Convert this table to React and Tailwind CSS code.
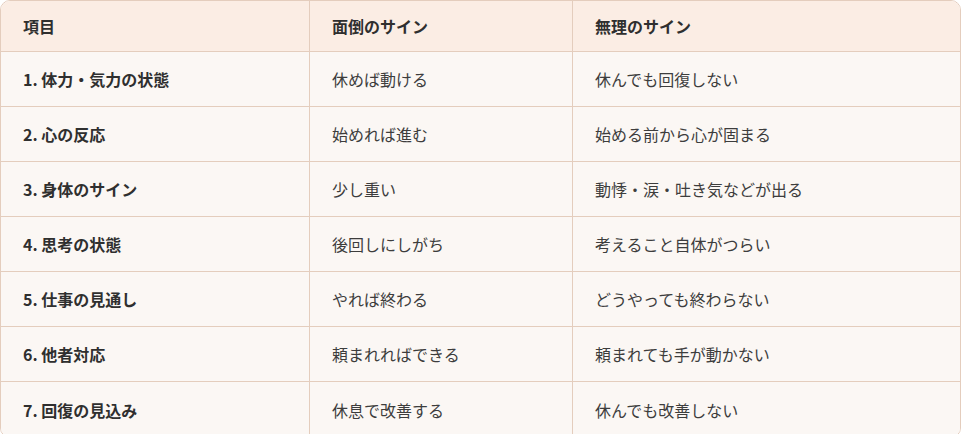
const ROWS = [
  ['1. 体力・気力の状態', '休めば動ける', '休んでも回復しない'],
  ['2. 心の反応', '始めれば進む', '始める前から心が固まる'],
  ['3. 身体のサイン', '少し重い', '動悸・涙・吐き気などが出る'],
  ['4. 思考の状態', '後回しにしがち', '考えること自体がつらい'],
  ['5. 仕事の見通し', 'やれば終わる', 'どうやっても終わらない'],
  ['6. 他者対応', '頼まれればできる', '頼まれても手が動かない'],
  ['7. 回復の見込み', '休息で改善する', '休んでも改善しない'],
];

const HEAD = ['項目', '面倒のサイン', '無理のサイン'];

export default function App() {
  return (
    <div className="w-[961px] bg-white font-['Noto_Sans_CJK_JP',sans-serif] text-[16px]">
      <div className="rounded-[10px] border border-[#e4cdbd] overflow-hidden">
        <div className="grid grid-cols-[309px_263px_1fr] bg-[#fbede4]">
          {HEAD.map((h, i) => (
            <div key={h}
              className={`h-[51px] flex items-center px-[22px] font-bold text-[#2f2f2f] border-b border-[#e4cdbd] ${i < 2 ? 'border-r' : ''}`}>
              {h}
            </div>
          ))}
        </div>
        <div className="bg-[#fbf7f4]">
          {ROWS.map((r, ri) => (
            <div key={ri} className="grid grid-cols-[309px_263px_1fr]">
              {r.map((c, i) => (
                <div key={i}
                  className={`h-[55px] flex items-center px-[22px] border-[#e4cdbd] ${ri < ROWS.length - 1 ? 'border-b' : ''} ${i < 2 ? 'border-r' : ''} ${i === 0 ? 'font-bold text-[#2f2f2f]' : 'text-[#3d3d3d]'}`}>
                  {c}
                </div>
              ))}
            </div>
          ))}
        </div>
      </div>
    </div>
  );
}
